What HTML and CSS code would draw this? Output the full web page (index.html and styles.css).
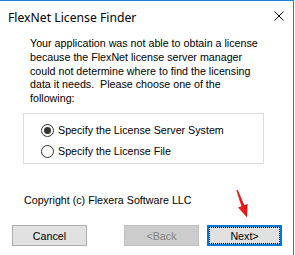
FILE: index.html
```html
<!DOCTYPE html>
<html>
<head>
<meta charset="utf-8">
<link rel="stylesheet" href="styles.css">
</head>
<body>
<div class="window">
  <div class="titlebar">
    <span class="title">FlexNet License Finder</span>
    <svg class="close" width="10" height="10" viewBox="0 0 10 10"><path d="M0.5 0.5 L9.5 9.5 M9.5 0.5 L0.5 9.5" stroke="#000" stroke-width="1" fill="none"/></svg>
  </div>
  <div class="content">
    <p class="message">Your application was not able to obtain a license<br>because the FlexNet license server manager<br>could not determine where to find the licensing<br>data it needs.&nbsp; Please choose one of the<br>following:</p>
    <div class="group">
      <div class="radio-row"><span class="radio checked"></span><span>Specify the License Server System</span></div>
      <div class="radio-row"><span class="radio"></span><span>Specify the License File</span></div>
    </div>
    <p class="copyright">Copyright (c) Flexera Software LLC</p>
    <div class="buttons">
      <div class="btn">Cancel</div>
      <div class="btn disabled">&lt;Back</div>
      <div class="btn default"><span class="focus">Next&gt;</span></div>
    </div>
  </div>
  <svg class="arrow" width="22" height="36" viewBox="0 0 22 36">
    <polygon points="7.7,4.8 6.3,5.2 11.4,21.2 8.1,22.4 17,32.5 17.5,19 14.2,20.2" fill="#ee1c1c"/>
    <polygon points="7.7,4.8 14.2,20.2 17.5,19 17,32.5" fill="#c40f0f" opacity="0.5"/>
  </svg>
</div>
</body>
</html>
```

FILE: styles.css
```css
html, body {
  margin: 0;
  padding: 0;
  background: #fff;
}
.window {
  position: relative;
  width: 293px;
  height: 254px;
  border-top: 1px solid #1883d7;
  border-right: 1px solid #1883d7;
  background: #fff;
  font-family: "Liberation Sans", Arial, sans-serif;
  font-size: 10.7px;
  color: #000;
}
.titlebar {
  height: 30px;
  display: flex;
  align-items: center;
  justify-content: space-between;
  padding: 0 9px 0 8px;
  box-sizing: border-box;
}
.title {
  font-family: "Noto Sans", sans-serif;
  font-size: 12.2px;
  color: #000;
  margin-top: 2px;
}
.close {
  display: block;
}
.content {
  display: flex;
  flex-direction: column;
  align-items: flex-start;
}
.message {
  margin: 6px 0 0 30px;
  line-height: 13.75px;
  height: 69px;
}
.group {
  margin: 7px 0 0 23px;
  width: 241px;
  height: 51px;
  box-sizing: border-box;
  border: 1px solid #dcdcdc;
  padding-top: 5.5px;
}
.radio-row {
  height: 21px;
  display: flex;
  align-items: center;
  gap: 4px;
  padding-left: 17px;
}
.radio {
  width: 13px;
  height: 13px;
  box-sizing: border-box;
  border: 1px solid #333;
  border-radius: 50%;
  background: #fff;
  display: flex;
  align-items: center;
  justify-content: center;
}
.radio.checked::before {
  content: "";
  width: 7px;
  height: 7px;
  border-radius: 50%;
  background: #333;
}
.copyright {
  margin: 30px 0 0 24px;
  line-height: 13.75px;
}
.buttons {
  margin: 17.25px 0 0 12px;
  display: flex;
}
.btn {
  width: 75px;
  height: 21px;
  box-sizing: border-box;
  border: 1px solid #adadad;
  background: #e1e1e1;
  display: flex;
  align-items: center;
  justify-content: center;
  font-size: 10.7px;
}
.btn.disabled {
  margin-left: 37px;
  background: #cccccc;
  border-color: #bfbfbf;
  color: #838383;
}
.btn.default {
  margin-left: 8px;
  border: 2px solid #0078d7;
  padding: 0;
}
.focus {
  flex: 1;
  align-self: stretch;
  border: 1px dotted #000;
  display: flex;
  align-items: center;
  justify-content: center;
}
.arrow {
  position: absolute;
  left: 230px;
  top: 184px;
}
```
